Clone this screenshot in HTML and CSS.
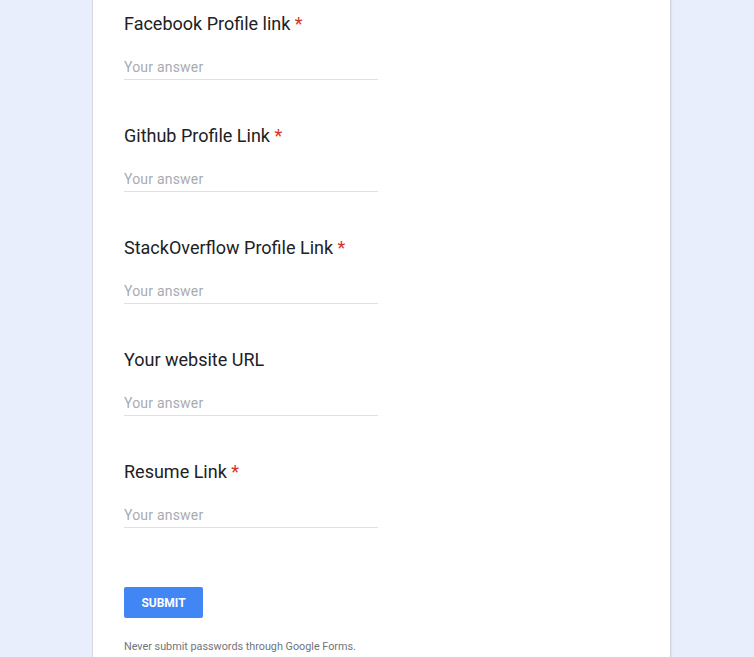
FILE: index.html
```html
<!DOCTYPE html>
<html>
<head>
<meta charset="utf-8">
<link rel="stylesheet" href="styles.css">
</head>
<body>
<div class="page">
  <div class="card">
    <div class="question">
      <div class="title">Facebook Profile link <span class="req">*</span></div>
      <div class="answer">Your answer</div>
    </div>
    <div class="question">
      <div class="title">Github Profile Link <span class="req">*</span></div>
      <div class="answer">Your answer</div>
    </div>
    <div class="question">
      <div class="title">StackOverflow Profile Link <span class="req">*</span></div>
      <div class="answer">Your answer</div>
    </div>
    <div class="question">
      <div class="title">Your website URL</div>
      <div class="answer">Your answer</div>
    </div>
    <div class="question last">
      <div class="title">Resume Link <span class="req">*</span></div>
      <div class="answer">Your answer</div>
    </div>
    <button class="submit">SUBMIT</button>
    <div class="footer">Never submit passwords through Google Forms.</div>
  </div>
</div>
</body>
</html>
```
FILE: styles.css
```css
html, body {
  margin: 0;
  padding: 0;
  height: 100%;
  overflow: hidden;
  background: #e8eefb;
  font-family: Roboto, "Liberation Sans", Arial, sans-serif;
}
.page {
  display: flex;
  padding-left: 93px;
}
.card {
  width: 546px;
  min-height: 700px;
  background: #fff;
  padding: 12px 0 0 31px;
  box-shadow: -1px 0 0 #d3d8e2, 1px 0 0 #d0d5de, 2px 0 1px #dde2ec;
}
.question {
  display: flex;
  flex-direction: column;
  margin-bottom: 44px;
}
.question.last {
  margin-bottom: 59px;
}
.title {
  font-size: 18px;
  line-height: 24px;
  color: #202124;
  margin-bottom: 21px;
}
.req {
  color: #d93025;
}
.answer {
  width: 254px;
  font-size: 14px;
  line-height: 20px;
  padding-bottom: 2px;
  color: #a9abb0;
  letter-spacing: 0.2px;
  border-bottom: 1px solid #e0e0e0;
}
.submit {
  display: block;
  width: 79px;
  height: 31px;
  border: none;
  border-radius: 2px;
  background: #4285f4;
  color: #fff;
  font-family: Roboto, "Liberation Sans", Arial, sans-serif;
  font-weight: bold;
  font-size: 12px;
  padding: 0;
  margin: 0;
}
.footer {
  margin-top: 22px;
  font-size: 10.8px;
  line-height: 14px;
  color: #70757a;
}
```
